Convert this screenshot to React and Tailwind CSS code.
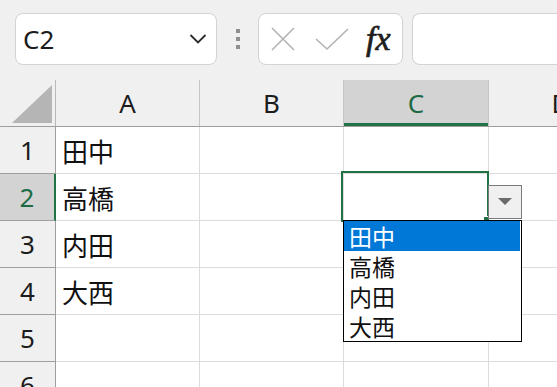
import { Fragment } from 'react'

const COLS = [
  { key: 'A', w: 'w-[144px]' },
  { key: 'B', w: 'w-[144px]' },
  { key: 'C', w: 'w-[145px]' },
  { key: 'D', w: 'w-[144px]' },
]

const ROWS = [
  { n: 1, a: '田中' },
  { n: 2, a: '高橋' },
  { n: 3, a: '内田' },
  { n: 4, a: '大西' },
  { n: 5, a: '' },
  { n: 6, a: '' },
]

const OPTIONS = ['田中', '高橋', '内田', '大西']

const latin = "font-['Noto_Sans',sans-serif]"
const cjk = "font-['Noto_Sans_CJK_JP',sans-serif]"

function Toolbar() {
  return (
    <div className="h-[80px] flex items-start pt-[13px] pl-[15px] bg-[#f0f0f0]">
      <div className="w-[202px] h-[52px] shrink-0 bg-white border border-[#d3d3d3] rounded-[8px] flex items-center justify-between pl-[7px] pr-[9px]">
        <span className={`${latin} text-[26px] text-[#1c1c1c] leading-none`}>C2</span>
        <svg width="18" height="12" viewBox="0 0 18 12">
          <path d="M1.5 2 L9 9.5 L16.5 2" fill="none" stroke="#2b2b2b" strokeWidth="1.8" />
        </svg>
      </div>
      <div className="w-[41px] h-[52px] shrink-0 flex flex-col items-center justify-center gap-[4px]">
        <span className="w-[4px] h-[4px] bg-[#8f8f8f]" />
        <span className="w-[4px] h-[4px] bg-[#8f8f8f]" />
        <span className="w-[4px] h-[4px] bg-[#8f8f8f]" />
      </div>
      <div className="w-[145px] h-[52px] shrink-0 bg-white border border-[#d3d3d3] rounded-[8px] flex items-center pl-[11px]">
        <svg width="26" height="26" viewBox="0 0 26 26">
          <path d="M2 2 L24 24 M24 2 L2 24" stroke="#b3b3b3" strokeWidth="1.6" fill="none" />
        </svg>
        <svg width="34" height="24" viewBox="0 0 34 24" className="ml-[19px]">
          <path d="M1 12 L12 22 L33 2" stroke="#b3b3b3" strokeWidth="1.6" fill="none" />
        </svg>
        <span className="ml-[17px] font-['Liberation_Serif',serif] italic text-[34px] text-[#1e1e1e] leading-none [-webkit-text-stroke:0.7px_#1e1e1e]">fx</span>
      </div>
      <div className="ml-[9px] flex-1 h-[52px] bg-white border border-r-0 border-[#d3d3d3] rounded-l-[8px]" />
    </div>
  )
}

export default function App() {
  return (
    <div className="w-[557px] h-[387px] overflow-hidden bg-white">
      <Toolbar />
      <div className="relative w-[633px]">
        {/* column headers */}
        <div className="flex h-[47px] bg-[#f0f0f0] border-b border-[#9e9e9e]">
          <div className="w-[56px] shrink-0 border-r border-[#b8b8b8] flex items-end justify-end pr-[3px] pb-[3px]">
            <svg width="40" height="38" viewBox="0 0 40 38">
              <path d="M40 0 L40 38 L0 38 Z" fill="#b5b5b5" />
            </svg>
          </div>
          {COLS.map((c) => (
            <div
              key={c.key}
              className={`${c.w} shrink-0 ${c.key === 'C' ? 'bg-[#d3d3d3] text-[#1d6b45] shadow-[inset_0_-3px_0_#217346]' : 'text-[#1c1c1c]'} ${c.key !== 'D' ? 'border-r border-[#c6c6c6]' : ''} flex items-center justify-center ${latin} text-[26px]`}
            >
              {c.key}
            </div>
          ))}
        </div>

        {/* body rows */}
        {ROWS.map((r) => (
          <div key={r.n} className="flex h-[47px]">
            <div
              className={`w-[56px] shrink-0 flex items-center justify-center ${latin} text-[26px] border-b ${r.n === 2 ? 'bg-[#d3d3d3] text-[#1d6b45] border-r-[2px] border-r-[#217346] border-b-[#9e9e9e]' : 'bg-[#f0f0f0] text-[#1c1c1c] border-r border-r-[#9e9e9e] border-b-[#9e9e9e]'}`}
            >
              {r.n}
            </div>
            {COLS.map((c) => (
              <Fragment key={c.key}>
                <div
                  className={`${c.w} shrink-0 border-b border-[#dcdcdc] ${c.key !== 'D' ? 'border-r' : ''} flex items-center pl-[6px] ${cjk} text-[26px] text-[#111]`}
                >
                  {c.key === 'A' ? r.a : ''}
                </div>
              </Fragment>
            ))}
          </div>
        ))}

        {/* active cell */}
        <div className="absolute left-[341px] top-[91px] w-[148px] h-[51px] border-[2px] border-[#217346]" />
        <div className="absolute left-[483px] top-[136px] w-[7px] h-[7px] bg-[#217346] border border-white" />

        {/* dropdown button */}
        <div className="absolute left-[488px] top-[105px] w-[34px] h-[34px] bg-[#f0f0f0] border border-[#7a7a7a] flex items-center justify-center">
          <svg width="14" height="8" viewBox="0 0 14 8">
            <path d="M0 0 L14 0 L7 7 Z" fill="#6b6b6b" />
          </svg>
        </div>

        {/* validation list */}
        <div className="absolute left-[343px] top-[140px] w-[179px] h-[122px] bg-white border border-black">
          {OPTIONS.map((o, i) => (
            <div
              key={o}
              className={`h-[30px] flex items-center pl-[5px] ${cjk} text-[23px] leading-[30px] ${i === 0 ? 'bg-[#0078d7] text-white mr-[1px]' : 'text-[#111]'}`}
            >
              {o}
            </div>
          ))}
        </div>
      </div>
    </div>
  )
}
